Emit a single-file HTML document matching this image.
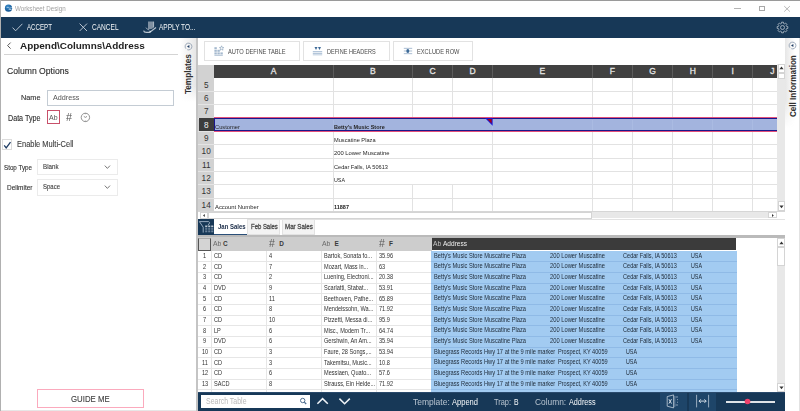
<!DOCTYPE html>
<html><head><meta charset="utf-8"><style>
html,body{margin:0;padding:0;}
body{width:800px;height:411px;overflow:hidden;position:relative;background:#fff;font-family:"Liberation Sans",sans-serif;}
body>div,body>svg{position:absolute;}
.t{white-space:nowrap;line-height:1;transform-origin:0 0;}
</style></head><body>
<div style="left:0.00px;top:0.00px;width:800.00px;height:1.00px;background:#9a9a9a"></div>
<div style="left:0.00px;top:0.00px;width:1.20px;height:411.00px;background:#b0b0b0"></div>
<div style="left:799.00px;top:38.00px;width:1.00px;height:373.00px;background:#e2e2e2"></div>
<svg style="left:4px;top:4px" width="10" height="10" viewBox="0 0 10 10"><defs><radialGradient id="ig" cx="0.4" cy="0.3" r="0.8"><stop offset="0" stop-color="#3a8ccc"/><stop offset="1" stop-color="#0b4a86"/></radialGradient></defs><circle cx="4.5" cy="4.2" r="3.6" fill="url(#ig)"/><path d="M2.6 3.4Q4.6 3 5.6 4.2L7.9 3.6M4.6 5.2Q5.8 5.8 7.6 5.4" stroke="#b8d4ea" stroke-width="0.8" fill="none"/></svg>
<div class="t" style="left:15.30px;top:4.63px;font-size:7.407px;color:#a0a0a0;transform:scaleX(0.8396);">Worksheet Design</div>
<div style="left:734.00px;top:7.60px;width:6.50px;height:0.70px;background:#b4b4b4"></div>
<div style="left:759.00px;top:5.60px;width:6.00px;height:5.60px;border:0.75px solid #a8a8a8;box-sizing:border-box"></div>
<svg style="left:783px;top:4.5px" width="8" height="8" viewBox="0 0 8 8"><path d="M1.2 1.1L6.9 6.6M6.9 1.1L1.2 6.6" stroke="#a0a0a0" stroke-width="0.75"/></svg>
<div style="left:1.00px;top:17.00px;width:799.00px;height:21.00px;background:#173857"></div>
<svg style="left:12px;top:23px" width="11" height="9" viewBox="0 0 11 9"><path d="M0.6 4.6L3.6 7.8L10.4 0.8" stroke="#c8d2dc" stroke-width="0.9" fill="none"/></svg>
<div class="t" style="left:26.70px;top:22.80px;font-size:8.505px;color:#f4f6f8;transform:scaleX(0.7247);">ACCEPT</div>
<svg style="left:79px;top:23px" width="9" height="9" viewBox="0 0 9 9"><path d="M0.6 0.6L8 8M8 0.6L0.6 8" stroke="#c8d2dc" stroke-width="0.9" fill="none"/></svg>
<div class="t" style="left:91.80px;top:22.80px;font-size:8.505px;color:#f4f6f8;transform:scaleX(0.7710);">CANCEL</div>
<svg style="left:140px;top:18px" width="20" height="18" viewBox="0 0 20 18"><path d="M8 3.6H14V9.4L11.5 11H8Z" fill="#7f90a2"/><path d="M13.6 3.8V9" stroke="#b4c0cc" stroke-width="0.8"/><path d="M3.6 12.6Q4 14.4 6.4 14.4H9.6L16 9.6" stroke="#b8c4d0" stroke-width="1.2" fill="none"/><path d="M6 9.6Q7 11.6 9.4 12" stroke="#a8b4c2" stroke-width="0.9" fill="none"/><circle cx="10.2" cy="13.6" r="0.8" fill="#e0e6ec"/></svg>
<div class="t" style="left:159.00px;top:22.80px;font-size:8.505px;color:#f4f6f8;transform:scaleX(0.7669);">APPLY TO...</div>
<svg style="left:776px;top:20.7px" width="13" height="13" viewBox="-6.5 -6.5 13 13"><path d="M3.92 -1.21 L5.32 -0.91 L5.32 0.91 L3.92 1.21 L3.63 1.91 L4.41 3.12 L3.12 4.41 L1.91 3.63 L1.21 3.92 L0.91 5.32 L-0.91 5.32 L-1.21 3.92 L-1.91 3.63 L-3.12 4.41 L-4.41 3.12 L-3.63 1.91 L-3.92 1.21 L-5.32 0.91 L-5.32 -0.91 L-3.92 -1.21 L-3.63 -1.91 L-4.41 -3.12 L-3.12 -4.41 L-1.91 -3.63 L-1.21 -3.92 L-0.91 -5.32 L0.91 -5.32 L1.21 -3.92 L1.91 -3.63 L3.12 -4.41 L4.41 -3.12 L3.63 -1.91Z" fill="none" stroke="#9eacba" stroke-width="1" stroke-linejoin="round"/><circle r="2" fill="none" stroke="#9eacba" stroke-width="1"/></svg>
<svg style="left:6px;top:41px" width="7" height="10" viewBox="0 0 7 10"><path d="M4.6 1.6L1.6 4.6L4.6 7.6" stroke="#444" stroke-width="0.9" fill="none"/></svg>
<div class="t" style="left:20.00px;top:41.16px;font-size:9.739px;font-weight:bold;color:#222;transform:scaleX(1.0221);">Append\Columns\Address</div>
<div style="left:3.50px;top:54.00px;width:174.50px;height:1.00px;background:#d4d4d4"></div>
<div class="t" style="left:7.00px;top:67.17px;font-size:8.779px;color:#303030;transform:scaleX(0.9834);-webkit-text-stroke:0.15px #303030;">Column Options</div>
<div class="t" style="left:20.50px;top:94.25px;font-size:8.093px;color:#303030;transform:scaleX(0.9032);-webkit-text-stroke:0.12px #303030;">Name</div>
<div style="left:47.00px;top:90.00px;width:127.00px;height:16.30px;border:1px solid #c4ccd4;box-sizing:border-box;background:#fff"></div>
<div class="t" style="left:53.00px;top:94.25px;font-size:8.093px;color:#555;transform:scaleX(0.8925);">Address</div>
<div class="t" style="left:7.50px;top:115.13px;font-size:8.230px;color:#303030;transform:scaleX(0.8697);-webkit-text-stroke:0.12px #303030;">Data Type</div>
<div style="left:47.00px;top:110.30px;width:13.00px;height:13.70px;border:1px solid #c8506a;box-sizing:border-box"></div>
<div class="t" style="left:49.20px;top:114.96px;font-size:6.310px;color:#555;transform:scaleX(1.1013);">Ab</div>
<div class="t" style="left:66.40px;top:112.61px;font-size:10.151px;color:#555;transform:scaleX(1.0628);">#</div>
<svg style="left:80px;top:112px" width="11" height="11" viewBox="0 0 11 11"><circle cx="5.4" cy="5.4" r="4.2" fill="none" stroke="#777" stroke-width="0.8"/><path d="M3.8 4.4L5.4 5.4L7 4.4M5.4 1.4V2.2M5.4 8.6V9.4" stroke="#666" stroke-width="0.7" fill="none"/></svg>
<div style="left:2.30px;top:139.40px;width:10.20px;height:10.20px;border:1px solid #dcdcdc;box-sizing:border-box;background:#fff"></div>
<svg style="left:2px;top:140px" width="11" height="11" viewBox="0 0 11 11"><path d="M2.2 5.4L4.2 7.9L8.5 2.2" stroke="#1e3c64" stroke-width="1.3" fill="none"/></svg>
<div class="t" style="left:16.50px;top:139.94px;font-size:9.053px;color:#404040;transform:scaleX(0.8256);-webkit-text-stroke:0.12px #404040;">Enable Multi-Cell</div>
<div class="t" style="left:4.00px;top:163.80px;font-size:7.682px;color:#303030;transform:scaleX(0.8127);-webkit-text-stroke:0.12px #303030;">Stop Type</div>
<div style="left:37.30px;top:159.20px;width:80.40px;height:16.30px;border:1px solid #ebebeb;box-sizing:border-box;background:#fff"></div>
<div class="t" style="left:43.00px;top:162.90px;font-size:7.682px;color:#383838;transform:scaleX(0.8066);-webkit-text-stroke:0.1px #383838;">Blank</div>
<svg style="left:103.6px;top:164.8px" width="8" height="5" viewBox="0 0 8 5"><path d="M0.8 0.6L3.4 3.4L6 0.6" stroke="#555" stroke-width="0.8" fill="none"/></svg>
<div class="t" style="left:6.50px;top:184.30px;font-size:7.682px;color:#303030;transform:scaleX(0.8415);-webkit-text-stroke:0.12px #303030;">Delimiter</div>
<div style="left:37.30px;top:179.40px;width:80.40px;height:16.20px;border:1px solid #ebebeb;box-sizing:border-box;background:#fff"></div>
<div class="t" style="left:43.00px;top:183.30px;font-size:7.682px;color:#383838;transform:scaleX(0.7805);-webkit-text-stroke:0.1px #383838;">Space</div>
<svg style="left:103.6px;top:185px" width="8" height="5" viewBox="0 0 8 5"><path d="M0.8 0.6L3.4 3.4L6 0.6" stroke="#555" stroke-width="0.8" fill="none"/></svg>
<div style="left:37.00px;top:388.60px;width:107.30px;height:19.70px;border:1.2px solid #fbaabd;box-sizing:border-box;background:#fff"></div>
<div style="left:1.00px;top:410.00px;width:195.00px;height:1.00px;background:#e6e6e6"></div>
<div class="t" style="left:71.30px;top:395.47px;font-size:8.779px;color:#404040;transform:scaleX(0.8915);-webkit-text-stroke:0.12px #404040;">GUIDE ME</div>
<div style="left:180.00px;top:38.00px;width:16.00px;height:64.00px;background:linear-gradient(to right,rgba(232,232,232,0) 0%,#e6e6e6 100%);-webkit-mask-image:linear-gradient(to bottom,#000 0%,#000 75%,transparent 100%)"></div>
<div style="left:196.00px;top:38.00px;width:2.00px;height:373.00px;background:#c4c4c4"></div>
<svg style="left:184px;top:41.5px" width="9" height="9" viewBox="-4.5 -4.5 9 9"><path d="M-2.6 2.2A3.4 3.4 0 1 1 -1.2 3.2" fill="none" stroke="#8796aa" stroke-width="0.8"/><path d="M-1.5 0L0.9 -1.5V1.5Z" fill="#1e3c64"/></svg>
<div class="t" style="left:168.65px;top:70.08px;width:40.10px;height:8.23px;font-size:8.230px;font-weight:bold;color:#303030;text-align:center;transform:rotate(-90deg) scaleX(0.9975);transform-origin:50% 50%">Templates</div>
<div style="left:785.00px;top:38.00px;width:10.00px;height:90.00px;background:linear-gradient(to right,#e6e6e6 0%,rgba(232,232,232,0) 100%);-webkit-mask-image:linear-gradient(to bottom,#000 0%,#000 70%,transparent 100%)"></div>
<svg style="left:788.4px;top:41px" width="9" height="9" viewBox="-4.5 -4.5 9 9"><path d="M-2.6 2.2A3.4 3.4 0 1 1 -1.2 3.2" fill="none" stroke="#8796aa" stroke-width="0.8"/><path d="M-1.5 0L0.9 -1.5V1.5Z" fill="#1e3c64"/></svg>
<div class="t" style="left:762.88px;top:81.88px;width:62.65px;height:8.23px;font-size:8.230px;font-weight:bold;color:#303030;text-align:center;transform:rotate(-90deg) scaleX(0.9897);transform-origin:50% 50%">Cell Information</div>
<div style="left:203.70px;top:41.30px;width:95.90px;height:19.30px;border:1px solid #e2e2e2;box-sizing:border-box;background:#fff"></div>
<div style="left:302.50px;top:41.30px;width:87.00px;height:19.30px;border:1px solid #e2e2e2;box-sizing:border-box;background:#fff"></div>
<div style="left:392.50px;top:41.30px;width:80.80px;height:19.30px;border:1px solid #e2e2e2;box-sizing:border-box;background:#fff"></div>
<div class="t" style="left:228.00px;top:48.10px;font-size:7.682px;color:#4a4a4a;transform:scaleX(0.7468);">AUTO DEFINE TABLE</div>
<div class="t" style="left:327.00px;top:48.10px;font-size:7.682px;color:#4a4a4a;transform:scaleX(0.7236);">DEFINE HEADERS</div>
<div class="t" style="left:417.00px;top:48.10px;font-size:7.682px;color:#4a4a4a;transform:scaleX(0.7431);">EXCLUDE ROW</div>
<svg style="left:213px;top:45px" width="12" height="12" viewBox="0 0 12 12"><g fill="#a4b8ce"><rect x="1.4" y="2.2" width="2.4" height="2"/><rect x="1.4" y="4.8" width="2.4" height="2"/><rect x="4.4" y="4.8" width="2.4" height="2"/><rect x="1.4" y="7.4" width="2.4" height="2"/><rect x="4.4" y="7.4" width="2.4" height="2"/><rect x="7.4" y="7.4" width="2.4" height="2"/><rect x="1.4" y="9.8" width="8.4" height="0.9"/></g><path d="M8.6 0.8L9.2 2.4L10.8 2.6L9.6 3.6L10 5.2L8.6 4.3L7.2 5.2L7.6 3.6L6.4 2.6L8 2.4Z" fill="none" stroke="#7f9ab6" stroke-width="0.6"/></svg>
<svg style="left:312px;top:46px" width="11" height="10" viewBox="0 0 11 10"><path d="M2.5 1h3l-1.5 3zM6 1h3l-1.5 3z" fill="#3d6a98"/><g fill="#b4c6da"><rect x="0.8" y="5" width="9.4" height="1.2"/><rect x="0.8" y="6.8" width="9.4" height="1.2"/><rect x="0.8" y="8.4" width="9.4" height="0.9"/></g></svg>
<svg style="left:403px;top:47px" width="10" height="8" viewBox="0 0 10 8"><g fill="#b8c8da"><rect x="0.8" y="0.8" width="8.4" height="1.2"/><rect x="0.8" y="3.4" width="8.4" height="1.2"/><rect x="0.8" y="6" width="8.4" height="1.2"/></g><ellipse cx="4.8" cy="4" rx="1.5" ry="2" fill="#3d6a98"/></svg>
<div style="left:198.00px;top:65.00px;width:16.00px;height:13.00px;background:#d2d2d2"></div>
<div style="left:214.00px;top:65.00px;width:563.00px;height:13.00px;background:#414141"></div>
<div style="left:332.50px;top:65.00px;width:1.00px;height:13.00px;background:#5c5c5c"></div>
<div style="left:412.00px;top:65.00px;width:1.00px;height:13.00px;background:#5c5c5c"></div>
<div style="left:452.00px;top:65.00px;width:1.00px;height:13.00px;background:#5c5c5c"></div>
<div style="left:492.00px;top:65.00px;width:1.00px;height:13.00px;background:#5c5c5c"></div>
<div style="left:591.90px;top:65.00px;width:1.00px;height:13.00px;background:#5c5c5c"></div>
<div style="left:631.80px;top:65.00px;width:1.00px;height:13.00px;background:#5c5c5c"></div>
<div style="left:672.20px;top:65.00px;width:1.00px;height:13.00px;background:#5c5c5c"></div>
<div style="left:712.30px;top:65.00px;width:1.00px;height:13.00px;background:#5c5c5c"></div>
<div style="left:752.20px;top:65.00px;width:1.00px;height:13.00px;background:#5c5c5c"></div>
<div class="t" style="left:270.66px;top:67.40px;font-size:8.505px;color:#e6e6e6;-webkit-text-stroke:0.3px #e6e6e6;">A</div>
<div class="t" style="left:369.91px;top:67.40px;font-size:8.505px;color:#e6e6e6;-webkit-text-stroke:0.3px #e6e6e6;">B</div>
<div class="t" style="left:429.43px;top:67.40px;font-size:8.505px;color:#e6e6e6;-webkit-text-stroke:0.3px #e6e6e6;">C</div>
<div class="t" style="left:469.43px;top:67.40px;font-size:8.505px;color:#e6e6e6;-webkit-text-stroke:0.3px #e6e6e6;">D</div>
<div class="t" style="left:539.61px;top:67.40px;font-size:8.505px;color:#e6e6e6;-webkit-text-stroke:0.3px #e6e6e6;">E</div>
<div class="t" style="left:609.75px;top:67.40px;font-size:8.505px;color:#e6e6e6;-webkit-text-stroke:0.3px #e6e6e6;">F</div>
<div class="t" style="left:649.19px;top:67.40px;font-size:8.505px;color:#e6e6e6;-webkit-text-stroke:0.3px #e6e6e6;">G</div>
<div class="t" style="left:689.68px;top:67.40px;font-size:8.505px;color:#e6e6e6;-webkit-text-stroke:0.3px #e6e6e6;">H</div>
<div class="t" style="left:731.57px;top:67.40px;font-size:8.505px;color:#e6e6e6;-webkit-text-stroke:0.3px #e6e6e6;">I</div>
<div class="t" style="left:770.17px;top:67.40px;font-size:8.505px;color:#e6e6e6;-webkit-text-stroke:0.3px #e6e6e6;">J</div>
<div style="left:198.00px;top:78.00px;width:16.00px;height:133.30px;background:#d2d2d2"></div>
<div style="left:214.00px;top:90.83px;width:563.00px;height:1.00px;background:#e2e2e2"></div>
<div style="left:198.00px;top:90.83px;width:16.00px;height:1.00px;background:#e4e4e4"></div>
<div style="left:214.00px;top:104.17px;width:563.00px;height:1.00px;background:#e2e2e2"></div>
<div style="left:198.00px;top:104.17px;width:16.00px;height:1.00px;background:#e4e4e4"></div>
<div style="left:214.00px;top:117.50px;width:563.00px;height:1.00px;background:#e2e2e2"></div>
<div style="left:198.00px;top:117.50px;width:16.00px;height:1.00px;background:#e4e4e4"></div>
<div style="left:214.00px;top:130.83px;width:563.00px;height:1.00px;background:#e2e2e2"></div>
<div style="left:198.00px;top:130.83px;width:16.00px;height:1.00px;background:#e4e4e4"></div>
<div style="left:214.00px;top:144.16px;width:563.00px;height:1.00px;background:#e2e2e2"></div>
<div style="left:198.00px;top:144.16px;width:16.00px;height:1.00px;background:#e4e4e4"></div>
<div style="left:214.00px;top:157.50px;width:563.00px;height:1.00px;background:#e2e2e2"></div>
<div style="left:198.00px;top:157.50px;width:16.00px;height:1.00px;background:#e4e4e4"></div>
<div style="left:214.00px;top:170.83px;width:563.00px;height:1.00px;background:#e2e2e2"></div>
<div style="left:198.00px;top:170.83px;width:16.00px;height:1.00px;background:#e4e4e4"></div>
<div style="left:214.00px;top:184.16px;width:563.00px;height:1.00px;background:#e2e2e2"></div>
<div style="left:198.00px;top:184.16px;width:16.00px;height:1.00px;background:#e4e4e4"></div>
<div style="left:214.00px;top:197.50px;width:563.00px;height:1.00px;background:#e2e2e2"></div>
<div style="left:198.00px;top:197.50px;width:16.00px;height:1.00px;background:#e4e4e4"></div>
<div style="left:214.00px;top:210.83px;width:563.00px;height:1.00px;background:#e2e2e2"></div>
<div style="left:198.00px;top:210.83px;width:16.00px;height:1.00px;background:#e4e4e4"></div>
<div style="left:332.50px;top:78.00px;width:1.00px;height:133.30px;background:#e2e2e2"></div>
<div style="left:412.00px;top:78.00px;width:1.00px;height:40.00px;background:#e2e2e2"></div>
<div style="left:412.00px;top:184.66px;width:1.00px;height:26.64px;background:#e2e2e2"></div>
<div style="left:452.00px;top:78.00px;width:1.00px;height:40.00px;background:#e2e2e2"></div>
<div style="left:452.00px;top:184.66px;width:1.00px;height:26.64px;background:#e2e2e2"></div>
<div style="left:492.00px;top:78.00px;width:1.00px;height:133.30px;background:#e2e2e2"></div>
<div style="left:591.90px;top:78.00px;width:1.00px;height:133.30px;background:#e2e2e2"></div>
<div style="left:631.80px;top:78.00px;width:1.00px;height:133.30px;background:#e2e2e2"></div>
<div style="left:672.20px;top:78.00px;width:1.00px;height:133.30px;background:#e2e2e2"></div>
<div style="left:712.30px;top:78.00px;width:1.00px;height:133.30px;background:#e2e2e2"></div>
<div style="left:752.20px;top:78.00px;width:1.00px;height:133.30px;background:#e2e2e2"></div>
<div style="left:198.50px;top:118.00px;width:15.50px;height:13.33px;background:#3c3c3c"></div>
<div style="left:213.50px;top:117.30px;width:563.50px;height:14.73px;background:#e2507a"></div>
<div style="left:214.00px;top:118.00px;width:563.00px;height:13.33px;background:#a3b4de;border-top:1.4px solid #1a168c;border-bottom:1.4px solid #1a168c;border-left:1.2px solid #1a168c;box-sizing:border-box"></div>
<div style="left:332.50px;top:119.50px;width:1.00px;height:10.33px;background:#aabbe2"></div>
<div style="left:492.00px;top:119.50px;width:1.00px;height:10.33px;background:#aabbe2"></div>
<div style="left:591.90px;top:119.50px;width:1.00px;height:10.33px;background:#aabbe2"></div>
<div style="left:631.80px;top:119.50px;width:1.00px;height:10.33px;background:#aabbe2"></div>
<div style="left:672.20px;top:119.50px;width:1.00px;height:10.33px;background:#aabbe2"></div>
<div style="left:712.30px;top:119.50px;width:1.00px;height:10.33px;background:#aabbe2"></div>
<div style="left:752.20px;top:119.50px;width:1.00px;height:10.33px;background:#aabbe2"></div>
<svg style="left:484.5px;top:118px" width="9" height="9" viewBox="0 0 9 9"><path d="M0 0H7.6V7.8Z" fill="#1414d8"/><path d="M2.2 0.9H6.6V5.4Z" fill="#a80018"/></svg>
<div class="t" style="left:203.91px;top:81.53px;font-size:8.230px;color:#333;">5</div>
<div class="t" style="left:203.91px;top:94.87px;font-size:8.230px;color:#333;">6</div>
<div class="t" style="left:203.91px;top:108.20px;font-size:8.230px;color:#333;">7</div>
<div class="t" style="left:203.91px;top:121.53px;font-size:8.230px;color:#f0f0f0;">8</div>
<div class="t" style="left:203.91px;top:134.86px;font-size:8.230px;color:#333;">9</div>
<div class="t" style="left:201.62px;top:148.20px;font-size:8.230px;color:#333;">10</div>
<div class="t" style="left:201.93px;top:161.53px;font-size:8.230px;color:#333;">11</div>
<div class="t" style="left:201.62px;top:174.86px;font-size:8.230px;color:#333;">12</div>
<div class="t" style="left:201.62px;top:188.20px;font-size:8.230px;color:#333;">13</div>
<div class="t" style="left:201.62px;top:201.53px;font-size:8.230px;color:#333;">14</div>
<div class="t" style="left:215.00px;top:123.76px;font-size:6.104px;color:#262626;transform:scaleX(0.9448);">Customer</div>
<div class="t" style="left:334.40px;top:123.76px;font-size:6.104px;font-weight:bold;color:#262626;transform:scaleX(0.9006);">Betty's Music Store</div>
<div class="t" style="left:334.40px;top:137.10px;font-size:6.104px;color:#262626;transform:scaleX(0.9288);">Muscatine Plaza</div>
<div class="t" style="left:334.40px;top:150.43px;font-size:6.104px;color:#262626;transform:scaleX(0.9565);">200 Lower Muscatine</div>
<div class="t" style="left:334.40px;top:163.76px;font-size:6.104px;color:#262626;transform:scaleX(0.9199);">Cedar Falls, IA 50613</div>
<div class="t" style="left:334.40px;top:177.10px;font-size:6.104px;color:#262626;transform:scaleX(0.8764);">USA</div>
<div class="t" style="left:215.20px;top:203.76px;font-size:6.104px;color:#262626;transform:scaleX(0.9634);">Account Number</div>
<div class="t" style="left:334.40px;top:203.76px;font-size:6.104px;font-weight:bold;color:#262626;transform:scaleX(0.9015);">11887</div>
<div style="left:777.00px;top:64.00px;width:8.00px;height:147.30px;background:#e8e8e8"></div>
<div style="left:777.50px;top:64.00px;width:7.30px;height:9.30px;background:#fff;border:0.6px solid #d4d4d4;box-sizing:border-box"></div>
<div style="left:777.50px;top:73.30px;width:7.30px;height:6.10px;background:#fff;border:0.6px solid #d4d4d4;box-sizing:border-box"></div>
<div style="left:777.50px;top:200.70px;width:7.30px;height:10.30px;background:#fff;border:0.6px solid #d4d4d4;box-sizing:border-box"></div>
<svg style="left:778.5px;top:66px" width="5" height="4" viewBox="0 0 5 4"><path d="M0.4 3.2L2.5 0.6L4.6 3.2Z" fill="#333"/></svg>
<svg style="left:778.5px;top:204.5px" width="5" height="4" viewBox="0 0 5 4"><path d="M0.4 0.6L2.5 3.2L4.6 0.6Z" fill="#333"/></svg>
<div style="left:198.00px;top:211.30px;width:579.00px;height:7.70px;background:#fff"></div>
<div style="left:198.00px;top:211.00px;width:587.00px;height:0.80px;background:#d6d6d6"></div>
<div style="left:592.00px;top:212.00px;width:176.00px;height:6.40px;background:#e8e8e8"></div>
<div style="left:199.50px;top:212.00px;width:8.00px;height:6.60px;background:#fff;border:0.6px solid #d4d4d4;box-sizing:border-box"></div>
<div style="left:207.50px;top:212.00px;width:384.50px;height:6.60px;background:#fff;border:0.6px solid #d4d4d4;box-sizing:border-box"></div>
<div style="left:768.00px;top:212.00px;width:8.60px;height:6.40px;background:#fff;border:0.6px solid #d4d4d4;box-sizing:border-box"></div>
<div style="left:198.00px;top:218.60px;width:587.00px;height:0.70px;background:#e2e2e2"></div>
<svg style="left:201.6px;top:213px" width="4" height="5" viewBox="0 0 4 5"><path d="M2.8 0.9L1 2.5L2.8 4.1Z" fill="#333"/></svg>
<svg style="left:770.5px;top:213px" width="4" height="5" viewBox="0 0 4 5"><path d="M1 0.9L2.8 2.5L1 4.1Z" fill="#333"/></svg>
<div style="left:198.00px;top:219.00px;width:16.40px;height:16.00px;background:#173857"></div>
<svg style="left:198px;top:219px" width="16.4" height="16" viewBox="0 0 16.4 16"><path d="M1.4 2.6H10.6Q12.4 3 11 5.2L9.8 6.2" stroke="#a4b6c8" stroke-width="0.9" fill="none"/><path d="M1.4 2.6L5.2 8.2V13.6" stroke="#a4b6c8" stroke-width="0.9" fill="none"/><rect x="7.2" y="6.6" width="2.1" height="1.2" fill="#e4eaf0"/><rect x="7.2" y="8.7" width="2.1" height="0.9" fill="#8fa3b8"/><rect x="7.2" y="10.5" width="2.1" height="0.9" fill="#8fa3b8"/><rect x="7.2" y="12.3" width="2.1" height="0.9" fill="#8fa3b8"/><rect x="10.2" y="6.6" width="2.1" height="1.2" fill="#e4eaf0"/><rect x="10.2" y="8.7" width="2.1" height="0.9" fill="#8fa3b8"/><rect x="10.2" y="10.5" width="2.1" height="0.9" fill="#8fa3b8"/><rect x="10.2" y="12.3" width="2.1" height="0.9" fill="#8fa3b8"/><rect x="13.2" y="6.6" width="2.1" height="1.2" fill="#e4eaf0"/><rect x="13.2" y="8.7" width="2.1" height="0.9" fill="#8fa3b8"/><rect x="13.2" y="10.5" width="2.1" height="0.9" fill="#8fa3b8"/><rect x="13.2" y="12.3" width="2.1" height="0.9" fill="#8fa3b8"/></svg>
<div style="left:214.40px;top:219.00px;width:32.90px;height:16.00px;background:#fff"></div>
<div style="left:214.40px;top:234.00px;width:32.90px;height:1.20px;background:#2a4f78"></div>
<div style="left:247.30px;top:219.00px;width:32.90px;height:16.00px;background:#f3f3f3;border:0.7px solid #e2e2e2;box-sizing:border-box"></div>
<div style="left:282.00px;top:219.00px;width:33.40px;height:16.00px;background:#f3f3f3;border:0.7px solid #e2e2e2;box-sizing:border-box"></div>
<div class="t" style="left:217.60px;top:223.28px;font-size:6.996px;font-weight:bold;color:#1a2c48;transform:scaleX(0.8550);">Jan Sales</div>
<div class="t" style="left:251.20px;top:223.28px;font-size:6.996px;color:#4a4a4a;transform:scaleX(0.8508);-webkit-text-stroke:0.3px #4a4a4a;">Feb Sales</div>
<div class="t" style="left:284.60px;top:223.28px;font-size:6.996px;color:#4a4a4a;transform:scaleX(0.8859);-webkit-text-stroke:0.3px #4a4a4a;">Mar Sales</div>
<div style="left:198.00px;top:235.20px;width:587.00px;height:2.40px;background:#bababa"></div>
<div style="left:198.00px;top:237.40px;width:233.60px;height:13.90px;background:#cdcdcd"></div>
<div style="left:431.60px;top:237.50px;width:304.70px;height:12.90px;background:#3b3b3b"></div>
<div style="left:198.30px;top:237.60px;width:12.70px;height:13.40px;background:#d4d4d4;border:0.8px solid #555;border-top-color:#aaa;box-sizing:border-box"></div>
<div style="left:198.00px;top:251.30px;width:233.10px;height:140.70px;background:#fff"></div>
<div style="left:431.10px;top:251.30px;width:305.90px;height:140.70px;background:#a2cbf1"></div>
<div style="left:737.00px;top:251.30px;width:40.00px;height:140.70px;background:#fff"></div>
<div style="left:198.00px;top:261.47px;width:233.10px;height:1.00px;background:#e6e6e6"></div>
<div style="left:431.10px;top:261.47px;width:305.90px;height:1.00px;background:#8fbae6"></div>
<div style="left:198.00px;top:272.13px;width:233.10px;height:1.00px;background:#e6e6e6"></div>
<div style="left:431.10px;top:272.13px;width:305.90px;height:1.00px;background:#8fbae6"></div>
<div style="left:198.00px;top:282.80px;width:233.10px;height:1.00px;background:#e6e6e6"></div>
<div style="left:431.10px;top:282.80px;width:305.90px;height:1.00px;background:#8fbae6"></div>
<div style="left:198.00px;top:293.47px;width:233.10px;height:1.00px;background:#e6e6e6"></div>
<div style="left:431.10px;top:293.47px;width:305.90px;height:1.00px;background:#8fbae6"></div>
<div style="left:198.00px;top:304.13px;width:233.10px;height:1.00px;background:#e6e6e6"></div>
<div style="left:431.10px;top:304.13px;width:305.90px;height:1.00px;background:#8fbae6"></div>
<div style="left:198.00px;top:314.80px;width:233.10px;height:1.00px;background:#e6e6e6"></div>
<div style="left:431.10px;top:314.80px;width:305.90px;height:1.00px;background:#8fbae6"></div>
<div style="left:198.00px;top:325.47px;width:233.10px;height:1.00px;background:#e6e6e6"></div>
<div style="left:431.10px;top:325.47px;width:305.90px;height:1.00px;background:#8fbae6"></div>
<div style="left:198.00px;top:336.14px;width:233.10px;height:1.00px;background:#e6e6e6"></div>
<div style="left:431.10px;top:336.14px;width:305.90px;height:1.00px;background:#8fbae6"></div>
<div style="left:198.00px;top:346.80px;width:233.10px;height:1.00px;background:#e6e6e6"></div>
<div style="left:431.10px;top:346.80px;width:305.90px;height:1.00px;background:#8fbae6"></div>
<div style="left:198.00px;top:357.47px;width:233.10px;height:1.00px;background:#e6e6e6"></div>
<div style="left:431.10px;top:357.47px;width:305.90px;height:1.00px;background:#8fbae6"></div>
<div style="left:198.00px;top:368.14px;width:233.10px;height:1.00px;background:#e6e6e6"></div>
<div style="left:431.10px;top:368.14px;width:305.90px;height:1.00px;background:#8fbae6"></div>
<div style="left:198.00px;top:378.80px;width:233.10px;height:1.00px;background:#e6e6e6"></div>
<div style="left:431.10px;top:378.80px;width:305.90px;height:1.00px;background:#8fbae6"></div>
<div style="left:198.00px;top:389.47px;width:233.10px;height:1.00px;background:#e6e6e6"></div>
<div style="left:431.10px;top:389.47px;width:305.90px;height:1.00px;background:#8fbae6"></div>
<div style="left:211.00px;top:251.30px;width:1.00px;height:140.70px;background:#e6e6e6"></div>
<div style="left:266.00px;top:251.30px;width:1.00px;height:140.70px;background:#e6e6e6"></div>
<div style="left:320.90px;top:251.30px;width:1.00px;height:140.70px;background:#e6e6e6"></div>
<div style="left:376.10px;top:251.30px;width:1.00px;height:140.70px;background:#e6e6e6"></div>
<div class="t" style="left:213.20px;top:240.10px;font-size:7.682px;color:#6a6a6a;transform:scaleX(0.8940);">Ab</div>
<div class="t" style="left:223.10px;top:241.44px;font-size:6.447px;font-weight:bold;color:#3a3a3a;">C</div>
<div class="t" style="left:268.90px;top:238.51px;font-size:10.151px;color:#5a5a5a;transform:scaleX(1.0273);">#</div>
<div class="t" style="left:279.30px;top:241.44px;font-size:6.447px;font-weight:bold;color:#3a3a3a;">D</div>
<div class="t" style="left:322.40px;top:240.10px;font-size:7.682px;color:#6a6a6a;transform:scaleX(0.8940);">Ab</div>
<div class="t" style="left:334.60px;top:241.44px;font-size:6.447px;font-weight:bold;color:#3a3a3a;">E</div>
<div class="t" style="left:378.90px;top:238.51px;font-size:10.151px;color:#5a5a5a;transform:scaleX(1.0273);">#</div>
<div class="t" style="left:389.10px;top:241.44px;font-size:6.447px;font-weight:bold;color:#3a3a3a;">F</div>
<div class="t" style="left:432.60px;top:240.59px;font-size:6.859px;color:#c8c8c8;transform:scaleX(0.9774);">Ab</div>
<div class="t" style="left:442.60px;top:240.71px;font-size:6.722px;color:#f0f0f0;transform:scaleX(0.9733);">Address</div>
<div class="t" style="left:203.24px;top:252.94px;font-size:6.447px;color:#303030;transform:scaleX(0.8700);">1</div>
<div class="t" style="left:213.50px;top:252.94px;font-size:6.447px;color:#303030;transform:scaleX(0.8700);">CD</div>
<div class="t" style="left:268.60px;top:252.94px;font-size:6.447px;color:#303030;transform:scaleX(0.8700);">4</div>
<div class="t" style="left:323.90px;top:252.94px;font-size:6.447px;color:#303030;transform:scaleX(0.8700);">Bartok, Sonata fo...</div>
<div class="t" style="left:378.80px;top:252.94px;font-size:6.447px;color:#303030;transform:scaleX(0.8700);">35.96</div>
<div class="t" style="left:433.70px;top:252.71px;font-size:6.722px;color:#1e2a38;transform:scaleX(0.8479);">Betty's Music Store Muscatine Plaza</div>
<div class="t" style="left:550.00px;top:252.71px;font-size:6.722px;color:#1e2a38;transform:scaleX(0.8608);">200 Lower Muscatine</div>
<div class="t" style="left:622.50px;top:252.71px;font-size:6.722px;color:#1e2a38;transform:scaleX(0.8323);">Cedar Falls, IA 50613</div>
<div class="t" style="left:690.80px;top:252.71px;font-size:6.722px;color:#1e2a38;transform:scaleX(0.7959);">USA</div>
<div class="t" style="left:203.24px;top:263.61px;font-size:6.447px;color:#303030;transform:scaleX(0.8700);">2</div>
<div class="t" style="left:213.50px;top:263.61px;font-size:6.447px;color:#303030;transform:scaleX(0.8700);">CD</div>
<div class="t" style="left:268.60px;top:263.61px;font-size:6.447px;color:#303030;transform:scaleX(0.8700);">7</div>
<div class="t" style="left:323.90px;top:263.61px;font-size:6.447px;color:#303030;transform:scaleX(0.8700);">Mozart, Mass in...</div>
<div class="t" style="left:378.80px;top:263.61px;font-size:6.447px;color:#303030;transform:scaleX(0.8700);">63</div>
<div class="t" style="left:433.70px;top:263.38px;font-size:6.722px;color:#1e2a38;transform:scaleX(0.8479);">Betty's Music Store Muscatine Plaza</div>
<div class="t" style="left:550.00px;top:263.38px;font-size:6.722px;color:#1e2a38;transform:scaleX(0.8608);">200 Lower Muscatine</div>
<div class="t" style="left:622.50px;top:263.38px;font-size:6.722px;color:#1e2a38;transform:scaleX(0.8323);">Cedar Falls, IA 50613</div>
<div class="t" style="left:690.80px;top:263.38px;font-size:6.722px;color:#1e2a38;transform:scaleX(0.7959);">USA</div>
<div class="t" style="left:203.24px;top:274.28px;font-size:6.447px;color:#303030;transform:scaleX(0.8700);">3</div>
<div class="t" style="left:213.50px;top:274.28px;font-size:6.447px;color:#303030;transform:scaleX(0.8700);">CD</div>
<div class="t" style="left:268.60px;top:274.28px;font-size:6.447px;color:#303030;transform:scaleX(0.8700);">2</div>
<div class="t" style="left:323.90px;top:274.28px;font-size:6.447px;color:#303030;transform:scaleX(0.8700);">Luening, Electroni...</div>
<div class="t" style="left:378.80px;top:274.28px;font-size:6.447px;color:#303030;transform:scaleX(0.8700);">20.38</div>
<div class="t" style="left:433.70px;top:274.04px;font-size:6.722px;color:#1e2a38;transform:scaleX(0.8479);">Betty's Music Store Muscatine Plaza</div>
<div class="t" style="left:550.00px;top:274.04px;font-size:6.722px;color:#1e2a38;transform:scaleX(0.8608);">200 Lower Muscatine</div>
<div class="t" style="left:622.50px;top:274.04px;font-size:6.722px;color:#1e2a38;transform:scaleX(0.8323);">Cedar Falls, IA 50613</div>
<div class="t" style="left:690.80px;top:274.04px;font-size:6.722px;color:#1e2a38;transform:scaleX(0.7959);">USA</div>
<div class="t" style="left:203.24px;top:284.94px;font-size:6.447px;color:#303030;transform:scaleX(0.8700);">4</div>
<div class="t" style="left:213.50px;top:284.94px;font-size:6.447px;color:#303030;transform:scaleX(0.8700);">DVD</div>
<div class="t" style="left:268.60px;top:284.94px;font-size:6.447px;color:#303030;transform:scaleX(0.8700);">9</div>
<div class="t" style="left:323.90px;top:284.94px;font-size:6.447px;color:#303030;transform:scaleX(0.8700);">Scarlatti, Stabat...</div>
<div class="t" style="left:378.80px;top:284.94px;font-size:6.447px;color:#303030;transform:scaleX(0.8700);">53.91</div>
<div class="t" style="left:433.70px;top:284.71px;font-size:6.722px;color:#1e2a38;transform:scaleX(0.8479);">Betty's Music Store Muscatine Plaza</div>
<div class="t" style="left:550.00px;top:284.71px;font-size:6.722px;color:#1e2a38;transform:scaleX(0.8608);">200 Lower Muscatine</div>
<div class="t" style="left:622.50px;top:284.71px;font-size:6.722px;color:#1e2a38;transform:scaleX(0.8323);">Cedar Falls, IA 50613</div>
<div class="t" style="left:690.80px;top:284.71px;font-size:6.722px;color:#1e2a38;transform:scaleX(0.7959);">USA</div>
<div class="t" style="left:203.24px;top:295.61px;font-size:6.447px;color:#303030;transform:scaleX(0.8700);">5</div>
<div class="t" style="left:213.50px;top:295.61px;font-size:6.447px;color:#303030;transform:scaleX(0.8700);">CD</div>
<div class="t" style="left:268.60px;top:295.61px;font-size:6.447px;color:#303030;transform:scaleX(0.8700);">11</div>
<div class="t" style="left:323.90px;top:295.61px;font-size:6.447px;color:#303030;transform:scaleX(0.8700);">Beethoven, Pathe...</div>
<div class="t" style="left:378.80px;top:295.61px;font-size:6.447px;color:#303030;transform:scaleX(0.8700);">65.89</div>
<div class="t" style="left:433.70px;top:295.38px;font-size:6.722px;color:#1e2a38;transform:scaleX(0.8479);">Betty's Music Store Muscatine Plaza</div>
<div class="t" style="left:550.00px;top:295.38px;font-size:6.722px;color:#1e2a38;transform:scaleX(0.8608);">200 Lower Muscatine</div>
<div class="t" style="left:622.50px;top:295.38px;font-size:6.722px;color:#1e2a38;transform:scaleX(0.8323);">Cedar Falls, IA 50613</div>
<div class="t" style="left:690.80px;top:295.38px;font-size:6.722px;color:#1e2a38;transform:scaleX(0.7959);">USA</div>
<div class="t" style="left:203.24px;top:306.28px;font-size:6.447px;color:#303030;transform:scaleX(0.8700);">6</div>
<div class="t" style="left:213.50px;top:306.28px;font-size:6.447px;color:#303030;transform:scaleX(0.8700);">CD</div>
<div class="t" style="left:268.60px;top:306.28px;font-size:6.447px;color:#303030;transform:scaleX(0.8700);">8</div>
<div class="t" style="left:323.90px;top:306.28px;font-size:6.447px;color:#303030;transform:scaleX(0.8700);">Mendelssohn, Wa...</div>
<div class="t" style="left:378.80px;top:306.28px;font-size:6.447px;color:#303030;transform:scaleX(0.8700);">71.92</div>
<div class="t" style="left:433.70px;top:306.05px;font-size:6.722px;color:#1e2a38;transform:scaleX(0.8479);">Betty's Music Store Muscatine Plaza</div>
<div class="t" style="left:550.00px;top:306.05px;font-size:6.722px;color:#1e2a38;transform:scaleX(0.8608);">200 Lower Muscatine</div>
<div class="t" style="left:622.50px;top:306.05px;font-size:6.722px;color:#1e2a38;transform:scaleX(0.8323);">Cedar Falls, IA 50613</div>
<div class="t" style="left:690.80px;top:306.05px;font-size:6.722px;color:#1e2a38;transform:scaleX(0.7959);">USA</div>
<div class="t" style="left:203.24px;top:316.94px;font-size:6.447px;color:#303030;transform:scaleX(0.8700);">7</div>
<div class="t" style="left:213.50px;top:316.94px;font-size:6.447px;color:#303030;transform:scaleX(0.8700);">CD</div>
<div class="t" style="left:268.60px;top:316.94px;font-size:6.447px;color:#303030;transform:scaleX(0.8700);">10</div>
<div class="t" style="left:323.90px;top:316.94px;font-size:6.447px;color:#303030;transform:scaleX(0.8700);">Pizzetti, Messa di...</div>
<div class="t" style="left:378.80px;top:316.94px;font-size:6.447px;color:#303030;transform:scaleX(0.8700);">95.9</div>
<div class="t" style="left:433.70px;top:316.71px;font-size:6.722px;color:#1e2a38;transform:scaleX(0.8479);">Betty's Music Store Muscatine Plaza</div>
<div class="t" style="left:550.00px;top:316.71px;font-size:6.722px;color:#1e2a38;transform:scaleX(0.8608);">200 Lower Muscatine</div>
<div class="t" style="left:622.50px;top:316.71px;font-size:6.722px;color:#1e2a38;transform:scaleX(0.8323);">Cedar Falls, IA 50613</div>
<div class="t" style="left:690.80px;top:316.71px;font-size:6.722px;color:#1e2a38;transform:scaleX(0.7959);">USA</div>
<div class="t" style="left:203.24px;top:327.61px;font-size:6.447px;color:#303030;transform:scaleX(0.8700);">8</div>
<div class="t" style="left:213.50px;top:327.61px;font-size:6.447px;color:#303030;transform:scaleX(0.8700);">LP</div>
<div class="t" style="left:268.60px;top:327.61px;font-size:6.447px;color:#303030;transform:scaleX(0.8700);">6</div>
<div class="t" style="left:323.90px;top:327.61px;font-size:6.447px;color:#303030;transform:scaleX(0.8700);">Misc., Modern Tr...</div>
<div class="t" style="left:378.80px;top:327.61px;font-size:6.447px;color:#303030;transform:scaleX(0.8700);">64.74</div>
<div class="t" style="left:433.70px;top:327.38px;font-size:6.722px;color:#1e2a38;transform:scaleX(0.8479);">Betty's Music Store Muscatine Plaza</div>
<div class="t" style="left:550.00px;top:327.38px;font-size:6.722px;color:#1e2a38;transform:scaleX(0.8608);">200 Lower Muscatine</div>
<div class="t" style="left:622.50px;top:327.38px;font-size:6.722px;color:#1e2a38;transform:scaleX(0.8323);">Cedar Falls, IA 50613</div>
<div class="t" style="left:690.80px;top:327.38px;font-size:6.722px;color:#1e2a38;transform:scaleX(0.7959);">USA</div>
<div class="t" style="left:203.24px;top:338.28px;font-size:6.447px;color:#303030;transform:scaleX(0.8700);">9</div>
<div class="t" style="left:213.50px;top:338.28px;font-size:6.447px;color:#303030;transform:scaleX(0.8700);">DVD</div>
<div class="t" style="left:268.60px;top:338.28px;font-size:6.447px;color:#303030;transform:scaleX(0.8700);">6</div>
<div class="t" style="left:323.90px;top:338.28px;font-size:6.447px;color:#303030;transform:scaleX(0.8700);">Gershwin, An Am...</div>
<div class="t" style="left:378.80px;top:338.28px;font-size:6.447px;color:#303030;transform:scaleX(0.8700);">35.94</div>
<div class="t" style="left:433.70px;top:338.05px;font-size:6.722px;color:#1e2a38;transform:scaleX(0.8479);">Betty's Music Store Muscatine Plaza</div>
<div class="t" style="left:550.00px;top:338.05px;font-size:6.722px;color:#1e2a38;transform:scaleX(0.8608);">200 Lower Muscatine</div>
<div class="t" style="left:622.50px;top:338.05px;font-size:6.722px;color:#1e2a38;transform:scaleX(0.8323);">Cedar Falls, IA 50613</div>
<div class="t" style="left:690.80px;top:338.05px;font-size:6.722px;color:#1e2a38;transform:scaleX(0.7959);">USA</div>
<div class="t" style="left:201.68px;top:348.95px;font-size:6.447px;color:#303030;transform:scaleX(0.8700);">10</div>
<div class="t" style="left:213.50px;top:348.95px;font-size:6.447px;color:#303030;transform:scaleX(0.8700);">CD</div>
<div class="t" style="left:268.60px;top:348.95px;font-size:6.447px;color:#303030;transform:scaleX(0.8700);">3</div>
<div class="t" style="left:323.90px;top:348.95px;font-size:6.447px;color:#303030;transform:scaleX(0.8700);">Faure, 28 Songs,...</div>
<div class="t" style="left:378.80px;top:348.95px;font-size:6.447px;color:#303030;transform:scaleX(0.8700);">53.94</div>
<div class="t" style="left:433.70px;top:348.71px;font-size:6.722px;color:#1e2a38;transform:scaleX(0.8522);">Bluegrass Records Hwy 17 at the 9 mile marker</div>
<div class="t" style="left:558.30px;top:348.71px;font-size:6.722px;color:#1e2a38;transform:scaleX(0.8330);">Prospect, KY 40059</div>
<div class="t" style="left:625.80px;top:348.71px;font-size:6.722px;color:#1e2a38;transform:scaleX(0.7959);">USA</div>
<div class="t" style="left:201.89px;top:359.61px;font-size:6.447px;color:#303030;transform:scaleX(0.8700);">11</div>
<div class="t" style="left:213.50px;top:359.61px;font-size:6.447px;color:#303030;transform:scaleX(0.8700);">CD</div>
<div class="t" style="left:268.60px;top:359.61px;font-size:6.447px;color:#303030;transform:scaleX(0.8700);">3</div>
<div class="t" style="left:323.90px;top:359.61px;font-size:6.447px;color:#303030;transform:scaleX(0.8700);">Takemitsu, Music...</div>
<div class="t" style="left:378.80px;top:359.61px;font-size:6.447px;color:#303030;transform:scaleX(0.8700);">10.8</div>
<div class="t" style="left:433.70px;top:359.38px;font-size:6.722px;color:#1e2a38;transform:scaleX(0.8522);">Bluegrass Records Hwy 17 at the 9 mile marker</div>
<div class="t" style="left:558.30px;top:359.38px;font-size:6.722px;color:#1e2a38;transform:scaleX(0.8330);">Prospect, KY 40059</div>
<div class="t" style="left:625.80px;top:359.38px;font-size:6.722px;color:#1e2a38;transform:scaleX(0.7959);">USA</div>
<div class="t" style="left:201.68px;top:370.28px;font-size:6.447px;color:#303030;transform:scaleX(0.8700);">12</div>
<div class="t" style="left:213.50px;top:370.28px;font-size:6.447px;color:#303030;transform:scaleX(0.8700);">CD</div>
<div class="t" style="left:268.60px;top:370.28px;font-size:6.447px;color:#303030;transform:scaleX(0.8700);">6</div>
<div class="t" style="left:323.90px;top:370.28px;font-size:6.447px;color:#303030;transform:scaleX(0.8700);">Messiaen, Quato...</div>
<div class="t" style="left:378.80px;top:370.28px;font-size:6.447px;color:#303030;transform:scaleX(0.8700);">57.6</div>
<div class="t" style="left:433.70px;top:370.05px;font-size:6.722px;color:#1e2a38;transform:scaleX(0.8522);">Bluegrass Records Hwy 17 at the 9 mile marker</div>
<div class="t" style="left:558.30px;top:370.05px;font-size:6.722px;color:#1e2a38;transform:scaleX(0.8330);">Prospect, KY 40059</div>
<div class="t" style="left:625.80px;top:370.05px;font-size:6.722px;color:#1e2a38;transform:scaleX(0.7959);">USA</div>
<div class="t" style="left:201.68px;top:380.95px;font-size:6.447px;color:#303030;transform:scaleX(0.8700);">13</div>
<div class="t" style="left:213.50px;top:380.95px;font-size:6.447px;color:#303030;transform:scaleX(0.8700);">SACD</div>
<div class="t" style="left:268.60px;top:380.95px;font-size:6.447px;color:#303030;transform:scaleX(0.8700);">8</div>
<div class="t" style="left:323.90px;top:380.95px;font-size:6.447px;color:#303030;transform:scaleX(0.8700);">Strauss, Ein Helde...</div>
<div class="t" style="left:378.80px;top:380.95px;font-size:6.447px;color:#303030;transform:scaleX(0.8700);">71.92</div>
<div class="t" style="left:433.70px;top:380.71px;font-size:6.722px;color:#1e2a38;transform:scaleX(0.8522);">Bluegrass Records Hwy 17 at the 9 mile marker</div>
<div class="t" style="left:558.30px;top:380.71px;font-size:6.722px;color:#1e2a38;transform:scaleX(0.8330);">Prospect, KY 40059</div>
<div class="t" style="left:625.80px;top:380.71px;font-size:6.722px;color:#1e2a38;transform:scaleX(0.7959);">USA</div>
<div style="left:777.00px;top:237.50px;width:8.00px;height:154.50px;background:#e8e8e8"></div>
<div style="left:777.40px;top:237.50px;width:7.40px;height:9.80px;background:#fff;border:0.6px solid #d4d4d4;box-sizing:border-box"></div>
<div style="left:777.40px;top:247.30px;width:7.40px;height:18.70px;background:#fff;border:0.6px solid #d4d4d4;box-sizing:border-box"></div>
<div style="left:777.40px;top:383.00px;width:7.40px;height:8.60px;background:#fff;border:0.6px solid #d4d4d4;box-sizing:border-box"></div>
<svg style="left:778.6px;top:240.5px" width="5" height="4" viewBox="0 0 5 4"><path d="M0.4 3.2L2.5 0.6L4.6 3.2Z" fill="#333"/></svg>
<svg style="left:778.6px;top:385.5px" width="5" height="4" viewBox="0 0 5 4"><path d="M0.4 0.6L2.5 3.2L4.6 0.6Z" fill="#333"/></svg>
<div style="left:198.00px;top:392.00px;width:587.00px;height:19.00px;background:#173857"></div>
<div style="left:198.00px;top:392.00px;width:587.00px;height:1.00px;background:#2a4a6c"></div>
<div style="left:201.10px;top:395.10px;width:109.40px;height:12.80px;background:#fff"></div>
<div class="t" style="left:205.80px;top:397.48px;font-size:8.642px;color:#b8b8b8;transform:scaleX(0.8073);">Search Table</div>
<svg style="left:299px;top:397px" width="9" height="9" viewBox="0 0 9 9"><circle cx="3.7" cy="3.5" r="2.2" fill="none" stroke="#4f6f90" stroke-width="1"/><path d="M5.3 5.1L7.2 7" stroke="#4f6f90" stroke-width="1.3"/></svg>
<svg style="left:316px;top:396px" width="14" height="10" viewBox="0 0 14 10"><path d="M1.4 7.8L6.6 2.6L11.8 7.8" stroke="#eef2f6" stroke-width="1.5" fill="none"/></svg>
<svg style="left:337.5px;top:396px" width="14" height="10" viewBox="0 0 14 10"><path d="M1.4 2.6L6.6 7.8L11.8 2.6" stroke="#eef2f6" stroke-width="1.5" fill="none"/></svg>
<div class="t" style="left:413.00px;top:396.97px;font-size:9.602px;color:#b8c4d0;transform:scaleX(0.8840);">Template:</div>
<div class="t" style="left:451.60px;top:396.97px;font-size:9.602px;color:#f6f8fa;transform:scaleX(0.7853);">Append</div>
<div class="t" style="left:493.80px;top:396.97px;font-size:9.602px;color:#b8c4d0;transform:scaleX(0.7708);">Trap:</div>
<div class="t" style="left:514.40px;top:396.97px;font-size:9.602px;color:#f6f8fa;transform:scaleX(0.7182);">B</div>
<div class="t" style="left:534.80px;top:396.97px;font-size:9.602px;color:#b8c4d0;transform:scaleX(0.8726);">Column:</div>
<div class="t" style="left:568.60px;top:396.97px;font-size:9.602px;color:#f6f8fa;transform:scaleX(0.7551);">Address</div>
<div style="left:659.60px;top:393.00px;width:27.20px;height:18.00px;background:#1e4569"></div>
<div style="left:688.80px;top:393.00px;width:27.20px;height:18.00px;background:#1e4569"></div>
<svg style="left:665px;top:394px" width="17" height="15" viewBox="0 0 17 15"><path d="M2.2 2.6L8.6 0.9V13.9L2.2 12.2Z" fill="none" stroke="#c4d0dc" stroke-width="0.8"/><path d="M3.9 5.2L6.5 9.6M6.5 5.2L3.9 9.6" stroke="#dfe6ee" stroke-width="0.9"/><g fill="#9fb2c6"><rect x="10.6" y="2.6" width="2.4" height="0.8"/><rect x="12" y="5.3" width="1" height="0.8"/><rect x="12" y="7.8" width="1" height="0.8"/><rect x="10.6" y="10.6" width="2.4" height="0.8"/></g><path d="M9.8 2v11" stroke="#9fb2c6" stroke-width="0.6"/></svg>
<svg style="left:694px;top:394px" width="17" height="15" viewBox="0 0 17 15"><path d="M2.6 0.8V13.4M14.6 0.8V13.4" stroke="#a8b8c8" stroke-width="0.9"/><path d="M5 7.1H12.2M6.8 5.3L5 7.1L6.8 8.9M10.4 5.3L12.2 7.1L10.4 8.9" stroke="#dfe6ee" stroke-width="0.9" fill="none"/></svg>
<div style="left:726.00px;top:400.50px;width:48.50px;height:2.00px;background:#dfe3e7"></div>
<svg style="left:744px;top:398px" width="7" height="7" viewBox="0 0 7 7"><circle cx="3.5" cy="3.5" r="2.8" fill="#f0406a"/></svg>
</body></html>
